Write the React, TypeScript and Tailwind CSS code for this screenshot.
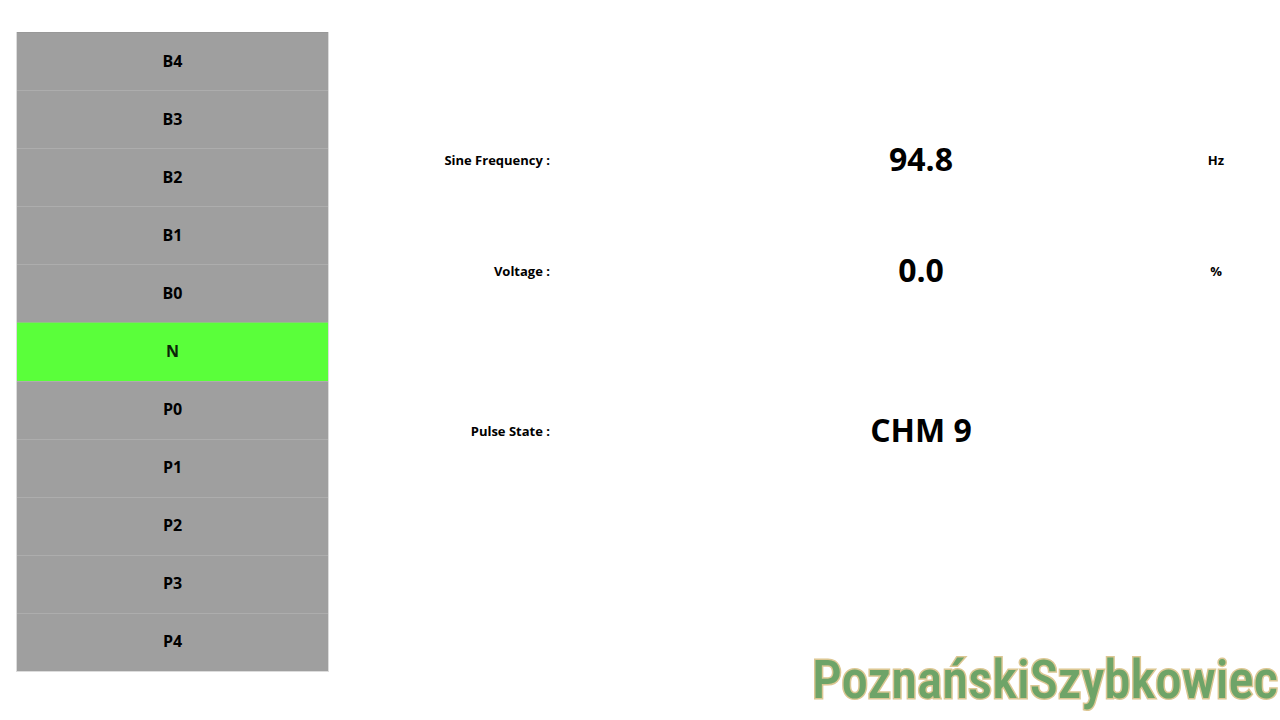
import { clsx } from "clsx";

const notches = ["B4", "B3", "B2", "B1", "B0", "N", "P0", "P1", "P2", "P3", "P4"];

const ACTIVE_NOTCH = "N";

function NotchColumn() {
  return (
    <div className="flex w-[313px] shrink-0 flex-col border-x border-b border-[#dcdcdc]">
      {notches.map((notch) => (
        <div
          key={notch}
          className={clsx(
            "flex flex-1 items-center justify-center border-t pb-0.5 text-base font-bold first:border-t-[#989898]",
            notch === ACTIVE_NOTCH
              ? "border-t-[#8bc97e] bg-[#5aff3a] text-[#0c2408]"
              : "border-t-[#adadad] bg-[#9f9f9f]"
          )}
        >
          {notch}
        </div>
      ))}
    </div>
  );
}

function Reading({
  label,
  value,
  unit,
  className,
}: {
  label: string;
  value: string;
  unit?: string;
  className?: string;
}) {
  return (
    <div
      className={clsx(
        "grid grid-cols-[221px_1fr_112px] items-center font-bold",
        className
      )}
    >
      <div className="pt-1 text-right text-[13px]">{label} :</div>
      <div className="pl-[132px] text-center text-[32px] leading-10">{value}</div>
      <div className="pt-1 text-center text-[13px]">{unit}</div>
    </div>
  );
}

export default function App() {
  return (
    <div className="relative flex h-screen flex-col overflow-hidden bg-white font-['Open_Sans','Noto_Sans',sans-serif] text-black">
      <main className="flex min-h-0 flex-1 pt-8 pr-2 pb-12 pl-4">
        <NotchColumn />
        <section className="flex-1 pt-[107px]">
          <Reading label="Sine Frequency" value="94.8" unit="Hz" />
          <Reading label="Voltage" value="0.0" unit="%" className="mt-[71px]" />
          <Reading label="Pulse State" value="CHM 9" className="mt-[120px]" />
        </section>
      </main>

      {/* channel watermark */}
      <div className="absolute right-0.5 bottom-0 font-['Roboto_Condensed',Roboto,sans-serif] text-[53px] leading-[80px] font-medium text-[#6ea468] [-webkit-text-stroke:3px_#dcc793] [paint-order:stroke_fill]">
        PoznańskiSzybkowiec
      </div>
    </div>
  );
}
